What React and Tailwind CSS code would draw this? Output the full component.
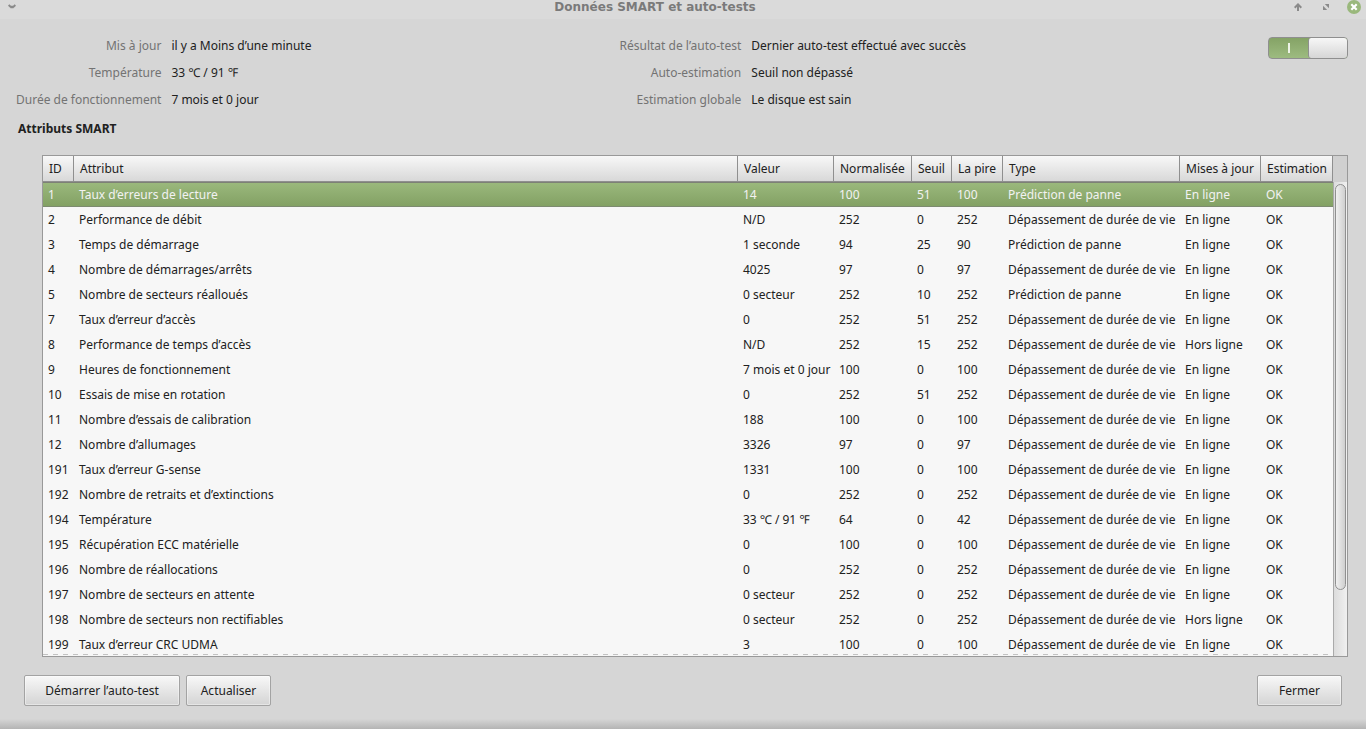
const columns = [
  { label: 'ID', width: 'w-[31px]' },
  { label: 'Attribut', width: '' },
  { label: 'Valeur', width: 'w-24' },
  { label: 'Normalisée', width: 'w-[78px]' },
  { label: 'Seuil', width: 'w-10' },
  { label: 'La pire', width: 'w-[51px]' },
  { label: 'Type', width: 'w-[177px]' },
  { label: 'Mises à jour', width: 'w-[81px]' },
  { label: 'Estimation', width: 'w-[72px]' },
];

const FAIL = 'Prédiction de panne';
const AGE = 'Dépassement de durée de vie';

const rows = [
  [1, 'Taux d’erreurs de lecture', '14', 100, 51, 100, FAIL, 'En ligne', 'OK'],
  [2, 'Performance de débit', 'N/D', 252, 0, 252, AGE, 'En ligne', 'OK'],
  [3, 'Temps de démarrage', '1 seconde', 94, 25, 90, FAIL, 'En ligne', 'OK'],
  [4, 'Nombre de démarrages/arrêts', '4025', 97, 0, 97, AGE, 'En ligne', 'OK'],
  [5, 'Nombre de secteurs réalloués', '0 secteur', 252, 10, 252, FAIL, 'En ligne', 'OK'],
  [7, 'Taux d’erreur d’accès', '0', 252, 51, 252, AGE, 'En ligne', 'OK'],
  [8, 'Performance de temps d’accès', 'N/D', 252, 15, 252, AGE, 'Hors ligne', 'OK'],
  [9, 'Heures de fonctionnement', '7 mois et 0 jour', 100, 0, 100, AGE, 'En ligne', 'OK'],
  [10, 'Essais de mise en rotation', '0', 252, 51, 252, AGE, 'En ligne', 'OK'],
  [11, 'Nombre d’essais de calibration', '188', 100, 0, 100, AGE, 'En ligne', 'OK'],
  [12, 'Nombre d’allumages', '3326', 97, 0, 97, AGE, 'En ligne', 'OK'],
  [191, 'Taux d’erreur G-sense', '1331', 100, 0, 100, AGE, 'En ligne', 'OK'],
  [192, 'Nombre de retraits et d’extinctions', '0', 252, 0, 252, AGE, 'En ligne', 'OK'],
  [194, 'Température', '33 ℃ / 91 ℉', 64, 0, 42, AGE, 'En ligne', 'OK'],
  [195, 'Récupération ECC matérielle', '0', 100, 0, 100, AGE, 'En ligne', 'OK'],
  [196, 'Nombre de réallocations', '0', 252, 0, 252, AGE, 'En ligne', 'OK'],
  [197, 'Nombre de secteurs en attente', '0 secteur', 252, 0, 252, AGE, 'En ligne', 'OK'],
  [198, 'Nombre de secteurs non rectifiables', '0 secteur', 252, 0, 252, AGE, 'Hors ligne', 'OK'],
  [199, 'Taux d’erreur CRC UDMA', '3', 100, 0, 100, AGE, 'En ligne', 'OK'],
];

function TitleBar() {
  return (
    <header className="flex h-[19px] shrink-0 items-start bg-[#dadada] text-[#8a8a8a]">
      <button aria-label="Menu de la fenêtre" className="flex h-[14px] w-6 items-center justify-center">
        <svg width="8" height="6" viewBox="0 0 8 6" fill="none" stroke="currentColor" strokeWidth="2">
          <path d="M.6 1 2.500 2.800h3L7.400 1M2.500 3.200h3" />
        </svg>
      </button>
      <h1 className="flex-1 text-center font-['DejaVu_Sans'] text-[12px] leading-[15px] font-bold text-[#7a7a7a]">
        Données SMART et auto-tests
      </h1>
      <div className="flex h-[14px] w-20 items-center justify-end gap-[14px] pr-[5px]">
        <button aria-label="Réduire" className="w-[14px]">
          <svg className="mx-auto block" width="8" height="8" viewBox="0 0 8 8" fill="none" stroke="currentColor" strokeWidth="2">
            <path d="M4 8V1.500M.7 4.700 4 1.400l3.300 3.300" />
          </svg>
        </button>
        <button aria-label="Agrandir" className="w-[14px]">
          <svg className="mx-auto block" width="6" height="6" viewBox="0 0 6 6" fill="currentColor">
            <path d="M1.800 0H6v4.200zM0 1.800V6h4.200z" />
          </svg>
        </button>
        <button aria-label="Fermer la fenêtre" className="w-[14px]">
          <svg className="block" width="14" height="14" viewBox="0 0 14 14">
            <circle cx="7" cy="7" r="7" fill="#9ab87c" />
            <path d="m4.300 4.300 5.400 5.400m0-5.400-5.400 5.400" stroke="#fff" strokeWidth="2.200" />
          </svg>
        </button>
      </div>
    </header>
  );
}

function InfoList({ items, className }) {
  return (
    <dl className={`grid flex-auto grid-cols-[auto_1fr] gap-[10px] ${className}`}>
      {items.map(([label, value]) => (
        <div key={label} className="contents">
          <dt className="text-right text-[#737373]">{label}</dt>
          <dd>{value}</dd>
        </div>
      ))}
    </dl>
  );
}

function Switch() {
  return (
    <label className="relative flex h-[22px] w-20 rounded-[4px] border border-[#8f8f8f] bg-linear-to-b from-[#85a366] to-[#9dbb80]">
      <input type="checkbox" role="switch" defaultChecked aria-label="SMART activé" className="absolute inset-0 opacity-0" />
      <span className="flex flex-1 items-center justify-center">
        <span className="h-[10px] w-[2px] bg-[#eef3e8]" />
      </span>
      <span className="w-[39px] rounded-[3px] border-l border-[#8f8f8f] bg-linear-to-b from-[#f7f7f7] to-[#d6d6d6]" />
    </label>
  );
}

function Button({ children, className }) {
  return (
    <button className={`h-[31px] rounded-[2px] border border-[#a3a3a3] bg-linear-to-b from-[#f8f8f8] to-[#d4d4d4] shadow-[inset_0_0_0_1px_rgba(255,255,255,0.4)] ${className}`}>
      {children}
    </button>
  );
}

function AttributeTable() {
  return (
    <div className="mr-[18px] ml-[42px] flex min-h-0 flex-1 border border-[#999]">
      <div className="relative min-w-0 flex-1 overflow-hidden bg-[#f7f7f7]">
        <table className="w-full table-fixed border-separate border-spacing-0 whitespace-nowrap">
          <thead>
            <tr className="h-[26px]">
              {columns.map(({ label, width }) => (
                <th key={label} scope="col" className={`${width} border-r border-b border-[#8f8f8f] bg-linear-to-b from-[#f8f8f8] to-[#d8d8d8] p-0 pl-[6px] text-left font-normal`}>
                  {label}
                </th>
              ))}
            </tr>
          </thead>
          <tbody>
            {rows.map((row, i) => (
              <tr key={row[0]} className="h-[25px]">
                {row.map((cell, j) => (
                  <td
                    key={j}
                    className={`p-0 pl-[5px] ${i === 0 ? 'border-y border-t-[#7d8076] border-b-[#7d8b70] bg-linear-to-b from-[#9ab87c] to-[#83a164] text-[#f2f2f2]' : ''}`}
                  >
                    {cell}
                  </td>
                ))}
              </tr>
            ))}
          </tbody>
        </table>
        <div className="absolute inset-x-0 bottom-px h-px bg-[repeating-linear-gradient(to_right,#c2c2c2_0_5px,transparent_5px_10px)]" />
      </div>
      <div className="flex w-[14px] flex-col">
        <div className="h-[26px] bg-[#d0d0d0]" />
        <div className="flex-1 border-l border-[#aaa] bg-linear-to-r from-[#dcdcdc] to-[#f0f0f0] px-px pt-[2px]">
          <div className="h-[86%] rounded-full border border-[#909090] bg-linear-to-r from-[#f0f0f0] to-[#cfcfcf]" />
        </div>
      </div>
    </div>
  );
}

export default function App() {
  return (
    <div className="flex h-screen flex-col bg-[#d6d6d6] font-['Noto_Sans',sans-serif] text-[12px] leading-[17px] text-[#212121]">
      <TitleBar />
      <section className="flex items-start pt-[18px] pr-[18px] pl-4">
        <InfoList
          className="mr-4"
          items={[
            ['Mis à jour', 'il y a Moins d’une minute'],
            ['Température', '33 ℃ / 91 ℉'],
            ['Durée de fonctionnement', '7 mois et 0 jour'],
          ]}
        />
        <InfoList
          className="mr-[10px]"
          items={[
            ['Résultat de l’auto-test', 'Dernier auto-test effectué avec succès'],
            ['Auto-estimation', 'Seuil non dépassé'],
            ['Estimation globale', 'Le disque est sain'],
          ]}
        />
        <Switch />
      </section>
      <h2 className="mt-3 mb-[18px] px-[18px] font-bold">Attributs SMART</h2>
      <AttributeTable />
      <footer className="flex gap-[6px] px-6 pt-[18px] pb-[13px]">
        <Button className="w-[156px]">Démarrer l’auto-test</Button>
        <Button className="w-[85px]">Actualiser</Button>
        <Button className="ml-auto w-[85px]">Fermer</Button>
      </footer>
      <div className="h-[10px] shrink-0 bg-linear-to-b from-[#d6d6d6] to-[#b4b4b4]" />
    </div>
  );
}
